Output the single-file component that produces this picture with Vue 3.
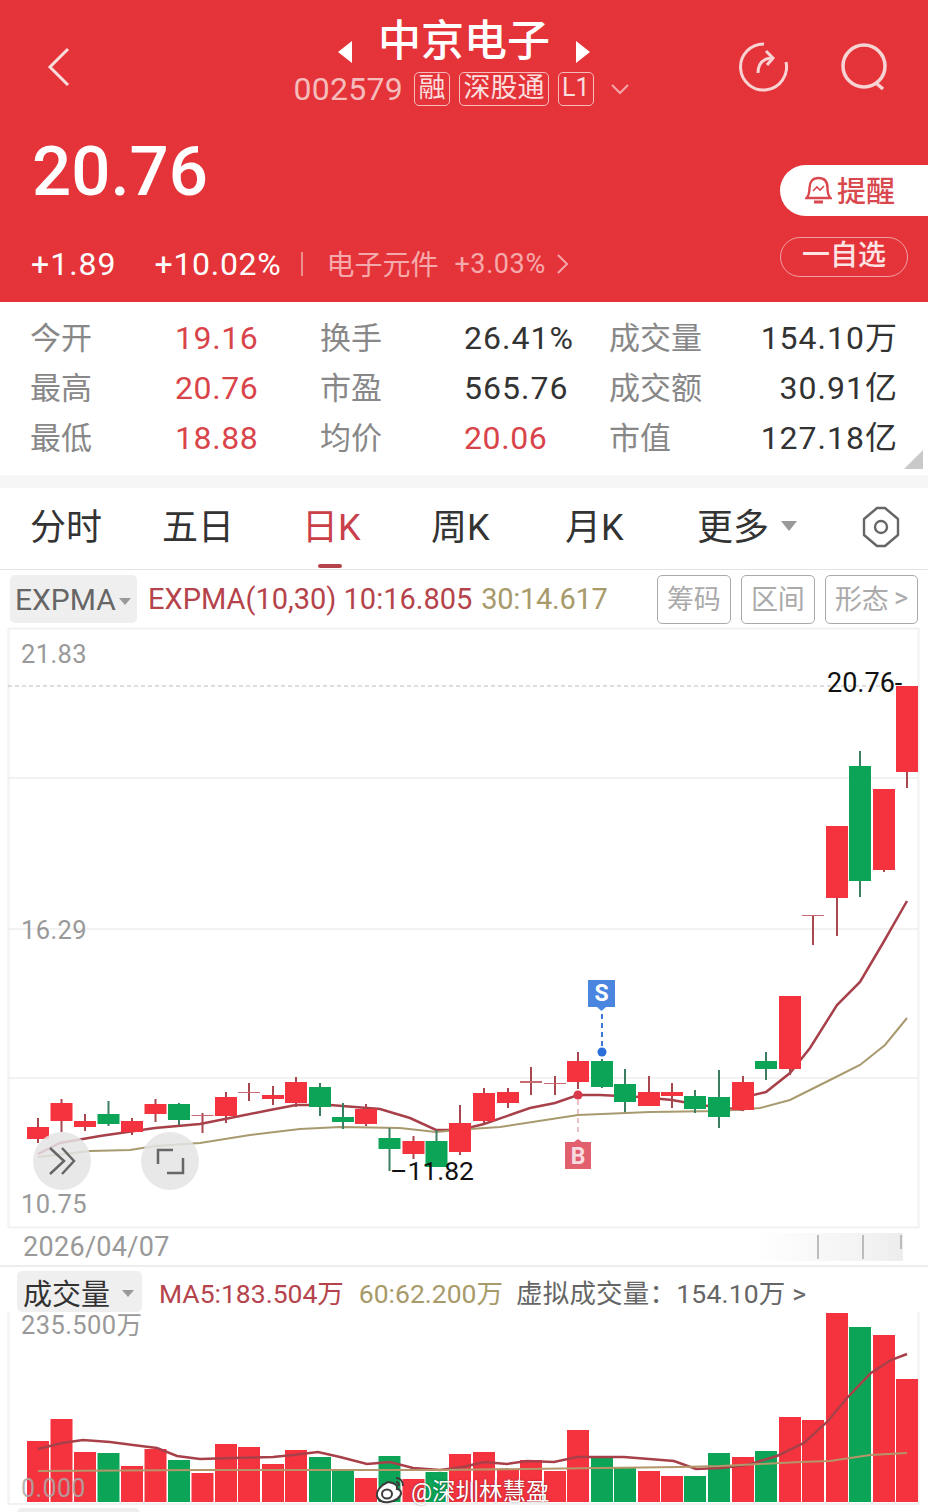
<script setup>
const RED = '#f5333f'
const GREEN = '#0ca558'

// candles: top, bottom, wick top, wick bottom, colour, x
const candles = [
  [1127, 1139, 1118, 1143, 'r', 38], [1103, 1121, 1099, 1132, 'r', 61.5], [1121, 1127, 1114, 1131, 'r', 85],
  [1114, 1124, 1101, 1126, 'g', 108.5], [1121, 1132, 1118, 1135, 'r', 132], [1104, 1114, 1099, 1122, 'r', 155.5],
  [1104, 1120, 1103, 1125, 'g', 179], [1115, 1116, 1113, 1133, 'r', 202.5], [1097, 1116, 1092, 1123, 'r', 226],
  [1092, 1093, 1083, 1101, 'r', 249], [1095, 1099, 1086, 1105, 'r', 273], [1082, 1103, 1077, 1107, 'r', 296],
  [1087, 1107, 1083, 1116, 'g', 320], [1117, 1122, 1103, 1129, 'g', 343], [1109, 1124, 1104, 1126, 'r', 366],
  [1138, 1149, 1128, 1171, 'g', 389.5], [1141, 1154, 1136, 1159, 'r', 413.5], [1141, 1167, 1130, 1167, 'g', 436.5],
  [1123, 1152, 1105, 1155, 'r', 460], [1093, 1121, 1088, 1125, 'r', 484], [1092, 1103, 1088, 1108, 'r', 508],
  [1081, 1083, 1067, 1095, 'r', 531], [1083, 1084, 1076, 1095, 'r', 555], [1061, 1082, 1052, 1089, 'r', 578],
  [1061, 1087, 1059, 1088, 'g', 602], [1084, 1102, 1069, 1112, 'g', 625], [1092, 1106, 1076, 1106, 'r', 649],
  [1092, 1096, 1083, 1108, 'r', 672], [1096, 1109, 1090, 1113, 'g', 695], [1097, 1117, 1070, 1128, 'g', 719],
  [1082, 1110, 1076, 1110, 'r', 743], [1061, 1069, 1052, 1080, 'g', 766], [996, 1069, 996, 1075, 'r', 790],
  [915, 916, 915, 945, 'r', 813], [826, 898, 826, 936, 'r', 837], [766, 881, 751, 897, 'g', 860],
  [789, 870, 789, 872, 'r', 884], [686, 772, 686, 788, 'r', 907]
].map(([top, bottom, wickTop, wickBottom, c, x]) => ({ top, bottom, wickTop, wickBottom, x, fill: c === 'r' ? RED : GREEN, wick: c === 'r' ? '#a8474f' : '#3d7d62' }))

const expma10 = '38,1154 60,1143 100,1136 155,1128 200,1124 230,1118 270,1110 296,1105 330,1105 380,1109 410,1118 436,1130 460,1130 484,1124 530,1108 555,1103 578,1095 600,1095 640,1097 672,1100 700,1105 743,1110 753,1095 766,1092 790,1073 810,1048 837,1005 860,982 883,943 907,901'
const expma30 = '38,1157 90,1151 130,1150 155,1146 200,1143 250,1135 300,1129 340,1127 400,1128 436,1132 470,1129 500,1127 578,1115 650,1112 720,1111 760,1108 790,1100 830,1080 860,1065 885,1045 907,1018'

// volume bars: top y and colour, all sit on the same base line
const volTops = [1441, 1419, 1452, 1453, 1466, 1449, 1460, 1473, 1444, 1447, 1464, 1450, 1457, 1470, 1478, 1456, 1479, 1472, 1454, 1452, 1470, 1460, 1471, 1430, 1456, 1468, 1471, 1476, 1476, 1453, 1457, 1451, 1417, 1420, 1313, 1327, 1335, 1379]
const volGreen = [3, 6, 12, 13, 15, 17, 24, 25, 28, 29, 31, 35]
const volumes = volTops.map((top, i) => ({ top, x: candles[i].x - 11, fill: volGreen.includes(i) ? GREEN : RED }))

const ma5 = '38,1449 62,1443 83,1440 110,1442 133,1445 157,1448 177,1456 200,1459 233,1458 273,1457 293,1455 318,1452 340,1457 367,1464 390,1462 413,1468 440,1470 463,1467 484,1462 507,1464 527,1461 554,1462 577,1457 624,1457 674,1461 696,1469 721,1468 747,1465 777,1456 804,1443 827,1422 847,1398 871,1373 891,1360 907,1354'
const ma60 = '38,1471 200,1470 440,1470 600,1468 680,1467 721,1466 800,1462 830,1461 870,1455 907,1453'

const stats = [
  ['今开', '19.16', 'up', '换手', '26.41%', '', '成交量', '154.10万'],
  ['最高', '20.76', 'up', '市盈', '565.76', '', '成交额', '30.91亿'],
  ['最低', '18.88', 'up', '均价', '20.06', 'up', '市值', '127.18亿']
]
const tabs = ['分时', '五日', '日K', '周K', '月K']
</script>

<template>
  <div class="page">
    <header class="head">
      <div class="nav">
        <svg class="back" width="24" height="40" viewBox="0 0 24 40"><path d="M21 2 3 20l18 18" fill="none" stroke="#f9dcdc" stroke-width="3" /></svg>
        <div class="nav-mid">
          <div class="title-row">
            <span class="tri tri-l"></span>
            <span class="title">中京电子</span>
            <span class="tri tri-r"></span>
          </div>
          <div class="code-row">
            <span class="code">002579</span>
            <span class="tag">融</span>
            <span class="tag">深股通</span>
            <span class="tag tag-l">L1</span>
            <svg class="code-more" width="20" height="12" viewBox="0 0 20 12"><path d="M2 2l8 8 8-8" fill="none" stroke="#f3a5a7" stroke-width="2" /></svg>
          </div>
        </div>
        <div class="nav-icons">
          <svg width="50" height="50" viewBox="0 0 50 50" fill="none" stroke="#f8d3d3" stroke-width="3">
            <path d="M26 2a23 23 0 1 0 22 18" />
            <path d="M20 31c0-8 4-14 13-15" />
            <path d="M28 9l7 7-6 7" />
          </svg>
          <svg width="50" height="50" viewBox="0 0 50 50" fill="none" stroke="#f8d3d3" stroke-width="3.5">
            <circle cx="24" cy="24" r="21" />
            <path d="M36 41l7 6" />
          </svg>
        </div>
      </div>
      <div class="quote">
        <div>
          <div class="price">20.76</div>
          <div class="change">
            <span class="chg">+1.89</span>
            <span class="chg chg-pct">+10.02%</span>
            <span class="sep"></span>
            <span class="sector">电子元件</span>
            <span class="sector-pct">+3.03%</span>
            <svg width="14" height="22" viewBox="0 0 14 22"><path d="M2 2l9 9-9 9" fill="none" stroke="#f3a5a7" stroke-width="2" /></svg>
          </div>
        </div>
        <div class="actions">
          <div class="remind">
            <svg width="27" height="30" viewBox="0 0 27 30" fill="none" stroke="#d8484e" stroke-width="2.4">
              <path d="M13.500 2c-6 0-9 4-9 10 0 5-1 8-3 10h24c-2-2-3-5-3-10 0-6-3-10-9-10z" />
              <path d="M9 26h9" stroke-width="3" />
              <path d="M8 15l4-4 3 3 4-4" stroke-width="1.600" />
            </svg>
            <span class="remind-text">提醒</span>
          </div>
          <div class="watch">一自选</div>
        </div>
      </div>
    </header>

    <section class="stats">
      <template v-for="row in stats" :key="row[0]">
        <span class="lab">{{ row[0] }}</span>
        <span class="val" :class="row[2]">{{ row[1] }}</span>
        <span class="lab">{{ row[3] }}</span>
        <span class="val" :class="row[5]">{{ row[4] }}</span>
        <span class="lab">{{ row[6] }}</span>
        <span class="val last">{{ row[7] }}</span>
      </template>
      <span class="corner"></span>
    </section>

    <nav class="tabs">
      <span v-for="(t, i) in tabs" :key="t" class="tab" :class="{ on: i === 2 }">{{ t }}</span>
      <span class="tab more">更多<i class="caret"></i></span>
      <svg class="gear" width="38" height="42" viewBox="0 0 38 42" fill="none" stroke="#666" stroke-width="2.400" stroke-linejoin="round">
        <path d="M15 2h8l13 11v16L23 40h-8L2 29V13z" />
        <circle cx="19" cy="21" r="6" />
      </svg>
    </nav>

    <div class="toolbar">
      <div class="chip">EXPMA<i class="caret small"></i></div>
      <span class="ind-red">EXPMA(10,30) 10:16.805</span>
      <span class="ind-tan">30:14.617</span>
      <div class="btns">
        <span class="btn">筹码</span>
        <span class="btn">区间</span>
        <span class="btn">形态<b>&gt;</b></span>
      </div>
    </div>

    <svg class="chart" width="928" height="600" viewBox="0 628 928 600">
      <path d="M8.500 628v600M918.500 628v600M8 628.500h911M8 1227.500h911" fill="none" stroke="#f2f2f2" stroke-width="2" />
      <path d="M8 778h910M8 929h910M8 1078h910" stroke="#eeeeee" stroke-width="1.500" />
      <path d="M8 686h890" stroke="#bbb" stroke-dasharray="4 3" />

      <polyline :points="expma10" fill="none" stroke="#a8404a" stroke-width="2.500" />
      <polyline :points="expma30" fill="none" stroke="#a89a6e" stroke-width="2" />

      <g v-for="c in candles" :key="c.x">
        <line :x1="c.x" :x2="c.x" :y1="c.wickTop" :y2="c.wickBottom" :stroke="c.wick" stroke-width="2" />
        <rect :x="c.x - 11" :y="c.top" width="22" :height="c.bottom - c.top" :fill="c.bottom - c.top < 3 ? '#c96a70' : c.fill" />
      </g>

      <text x="21" y="663" class="axis">21.83</text>
      <text x="21" y="939" class="axis">16.29</text>
      <text x="21" y="1213" class="axis">10.75</text>
      <text x="827" y="692" class="mark">20.76-</text>
      <text x="390" y="1180" class="mark low">–11.82</text>

      <path d="M602 1014v36" stroke="#3d78d8" stroke-width="2" stroke-dasharray="5 4" />
      <circle cx="602" cy="1052" r="4.500" fill="#2a6fdb" />
      <path d="M588 980h27v27h-9l-4.500 4-4.500-4h-9z" fill="#4a86e0" />
      <text x="601.500" y="1001" class="flag">S</text>

      <path d="M578 1100v36" stroke="#ecc0c5" stroke-width="2" stroke-dasharray="5 4" />
      <circle cx="578" cy="1095" r="4.500" fill="#d9394a" />
      <path d="M565 1142h9l4-3 4 3h9v27h-26z" fill="#e2606e" />
      <text x="578" y="1164" class="flag pale">B</text>

      <circle cx="62" cy="1161" r="29" fill="#e4e4e4" opacity=".85" />
      <path d="M50 1148l14 13-14 13M62 1148l12 13-12 13" fill="none" stroke="#666" stroke-width="2.500" />
      <circle cx="170" cy="1161" r="29" fill="#e4e4e4" opacity=".85" />
      <path d="M158 1164v-14h15M183 1158v15h-16" fill="none" stroke="#666" stroke-width="2.500" />
    </svg>

    <div class="date-row">
      <span>2026/04/07</span>
      <div class="smudge"><i></i><i></i><i></i></div>
    </div>

    <section class="vol">
      <div class="vol-head">
        <div class="chip vol-chip">成交量<i class="caret small"></i></div>
        <span class="ma5">MA5:183.504万</span>
        <span class="ma60">60:62.200万</span>
        <span class="virt">虚拟成交量：154.10万 &gt;</span>
      </div>
      <svg class="vol-chart" width="928" height="200" viewBox="0 1312 928 200">
        <path d="M8.500 1312v192M918.500 1312v192M8 1504h911" fill="none" stroke="#f2f2f2" stroke-width="2" />
        <rect v-for="b in volumes" :key="b.x" :x="b.x" :y="b.top" width="22" :height="1502 - b.top" :fill="b.fill" />
        <polyline :points="ma5" fill="none" stroke="#a8404a" stroke-width="2.500" />
        <polyline :points="ma60" fill="none" stroke="#b5966a" stroke-width="2" />
        <text x="21" y="1334" class="axis">235.500万</text>
        <text x="21" y="1497" class="axis zero">0.000</text>
        <rect x="17" y="1508" width="123" height="10" rx="5" fill="#eee" />
      </svg>
      <div class="wm">
        <svg width="32" height="30" viewBox="0 0 32 30" fill="#fff" stroke="#3b3b3b" stroke-width="2">
          <path d="M13 7C6 10 1 16 2 21c1 5 7 7 12 6 7-1 12-5 12-9 0-3-3-4-4-4 1-4-2-6-9-7z" />
          <ellipse cx="12" cy="19" rx="5" ry="4.500" />
          <path d="M21 3c4 0 7 3 7 8M21 7c2 0 3 2 3 4" fill="none" />
        </svg>
        <span>@深圳林慧盈</span>
      </div>
    </section>
  </div>
</template>

<style scoped>
.page {
  position: relative;
  width: 928px;
  height: 1512px;
  overflow: hidden;
  background: #fff;
  font-family: Roboto, "Noto Sans CJK SC", sans-serif;
}
.head {
  height: 302px;
  background: #e4343a;
  color: #fff;
}
.nav {
  height: 122px;
  display: grid;
  grid-template-columns: 1fr auto 1fr;
}
.back {
  margin: 47px 0 0 47px;
}
.nav-mid {
  display: flex;
  flex-direction: column;
  align-items: center;
  padding-top: 10px;
}
.title-row {
  display: flex;
  align-items: center;
  height: 53px;
}
.title {
  margin: 0 26px;
  font-size: 43px;
  font-weight: 500;
}
.tri {
  width: 0;
  height: 0;
  margin-top: 31px;
  border-top: 11px solid transparent;
  border-bottom: 11px solid transparent;
}
.tri-l {
  border-right: 14px solid #fff;
}
.tri-r {
  border-left: 14px solid #fff;
}
.code-row {
  display: flex;
  align-items: center;
  gap: 9px;
  height: 36px;
  margin: 8px 5px 0 0;
}
.code {
  margin-right: 2px;
  font-size: 32px;
  letter-spacing: 0.300px;
  color: #f6bcbc;
}
.tag {
  height: 34px;
  padding: 0 3.500px;
  box-sizing: border-box;
  border: 1.500px solid #f6bcbc;
  border-radius: 5px;
  font-size: 27px;
  line-height: 30px;
  color: #fbdede;
}
.tag-l {
  padding: 0 3px;
  font-size: 25px;
}
.code-more {
  margin-left: 7px;
}
.nav-icons {
  display: flex;
  justify-content: flex-end;
  gap: 52px;
  padding: 42px 38px 0 0;
}
.quote {
  display: flex;
  justify-content: space-between;
}
.price {
  height: 100px;
  padding-left: 32px;
  font-size: 69px;
  font-weight: 500;
  line-height: 100px;
}
.change {
  display: flex;
  align-items: center;
  height: 84px;
  padding: 0 0 0 31px;
}
.chg {
  font-size: 32px;
  letter-spacing: 1px;
  color: #fff;
}
.chg-pct {
  margin-left: 38px;
  letter-spacing: 0.700px;
}
.sep {
  width: 2px;
  height: 24px;
  margin: 0 23px 0 20px;
  background: #ef8e90;
}
.sector {
  margin-bottom: 3px;
  font-size: 28px;
  color: #f6a9ab;
}
.sector-pct {
  margin: 0 10px 0 16px;
  font-size: 27px;
  letter-spacing: 0.600px;
  color: #f6a9ab;
}
.actions {
  display: flex;
  flex-direction: column;
  align-items: flex-end;
  padding-top: 43px;
}
.remind {
  display: flex;
  align-items: center;
  gap: 5px;
  width: 148px;
  height: 51px;
  padding-left: 25px;
  box-sizing: border-box;
  background: #fff;
  border-radius: 26px 0 0 26px;
  font-size: 29px;
  font-weight: 500;
  color: #d8484e;
}
.remind-text {
  margin-bottom: 4px;
}
.watch {
  width: 128px;
  height: 40px;
  margin: 21px 20px 0 0;
  box-sizing: border-box;
  border: 1.500px solid #f0a0a2;
  border-radius: 20px;
  font-size: 28px;
  font-weight: 500;
  line-height: 36px;
  text-align: center;
  color: #fde4e4;
}
.stats {
  position: relative;
  display: grid;
  grid-template-columns: 145px 145px 144px 145px 100px 1fr;
  grid-auto-rows: 50px;
  align-items: center;
  height: 186px;
  box-sizing: border-box;
  padding: 11px 30px 0 30px;
  border-bottom: 13px solid #f6f6f6;
}
.lab {
  margin-bottom: 5px;
  font-size: 31px;
  color: #888;
}
.val {
  font-size: 32px;
  letter-spacing: 1px;
  color: #333;
}
.val.up {
  letter-spacing: 0.600px;
  color: #d9444a;
}
.val.last {
  margin-bottom: 7px;
  text-align: right;
}
.corner {
  position: absolute;
  right: 5px;
  bottom: 6px;
  width: 0;
  height: 0;
  border-left: 19px solid transparent;
  border-bottom: 19px solid #c9c9c9;
}
.tabs {
  display: grid;
  grid-template-columns: 132px 140px 129px 134px 132px 165px 1fr;
  align-items: center;
  height: 82px;
  box-sizing: border-box;
  padding: 0 28px 9px 30px;
  border-bottom: 1px solid #e4e4e4;
}
.tab {
  position: relative;
  font-size: 36px;
  color: #333;
}
.tab.on {
  color: #c9404a;
}
.tab.on::after {
  content: "";
  position: absolute;
  left: 16px;
  bottom: -18px;
  width: 24px;
  height: 4px;
  background: #b5434b;
  border-radius: 2px;
}
.more {
  display: flex;
  align-items: center;
  gap: 12px;
}
.caret {
  width: 0;
  height: 0;
  margin-top: 4px;
  border-left: 8px solid transparent;
  border-right: 8px solid transparent;
  border-top: 10px solid #999;
}
.caret.small {
  border-left-width: 6px;
  border-right-width: 6px;
  border-top-width: 7px;
}
.gear {
  justify-self: end;
  margin-top: 6px;
}
.toolbar {
  display: flex;
  align-items: center;
  height: 58px;
  padding: 0 10px;
  font-size: 29px;
}
.chip {
  display: flex;
  align-items: center;
  gap: 3px;
  width: 127px;
  height: 48px;
  padding-left: 5px;
  box-sizing: border-box;
  background: #efefef;
  border-radius: 5px;
  font-size: 30px;
  color: #666;
}
.ind-red {
  margin-left: 11px;
  color: #b5434b;
}
.ind-tan {
  margin-left: 9px;
  letter-spacing: -0.300px;
  color: #a89a6a;
}
.btns {
  display: flex;
  gap: 10px;
  margin-left: auto;
}
.btn {
  display: flex;
  align-items: center;
  justify-content: center;
  height: 49px;
  padding: 0 9px 3px;
  box-sizing: border-box;
  border: 1px solid #aaa;
  border-radius: 5px;
  font-size: 27px;
  color: #aaa;
}
.btn b {
  margin-left: 5px;
  font-weight: 400;
}
.chart,
.vol-chart {
  display: block;
  overflow: visible;
}
.axis {
  font-size: 25.500px;
  letter-spacing: 0.400px;
  fill: #999;
}
.zero {
  font-size: 25px;
  fill: #aaa;
  opacity: 0.85;
}
.mark {
  font-size: 27px;
  fill: #111;
}
.mark.low {
  font-size: 26.500px;
}
.flag {
  font-size: 23px;
  font-weight: 700;
  text-anchor: middle;
  fill: #fff;
}
.flag.pale {
  fill: #f8dce0;
}
.date-row {
  position: relative;
  display: flex;
  align-items: center;
  height: 39px;
  padding-left: 23px;
  box-sizing: border-box;
  border-bottom: 2px solid #eee;
  font-size: 27px;
  letter-spacing: 0.300px;
  color: #999;
}
.smudge {
  position: absolute;
  left: 755px;
  top: 5px;
  width: 148px;
  height: 28px;
  background: linear-gradient(90deg, #fff, #f5f5f5 60%, #ececec);
  opacity: 0.9;
}
.smudge i {
  position: absolute;
  top: 2px;
  width: 2px;
  height: 24px;
  background: #b5b5b5;
}
.smudge i:nth-child(1) {
  left: 62px;
}
.smudge i:nth-child(2) {
  left: 107px;
}
.smudge i:nth-child(3) {
  left: 145px;
  height: 14px;
}
.vol {
  position: relative;
}
.vol-head {
  display: flex;
  align-items: center;
  height: 45px;
  padding: 4px 0 0 17px;
  box-sizing: border-box;
  font-size: 26.500px;
}
.vol-chip {
  flex: none;
  width: 125px;
  height: 41px;
  padding-left: 6px;
  gap: 12px;
  color: #333;
  font-size: 29px;
}
.ma5 {
  margin-left: 17px;
  color: #b5434b;
}
.ma60 {
  margin-left: 15px;
  color: #a89a6a;
}
.virt {
  margin-left: 13px;
  letter-spacing: 0.200px;
  color: #666;
}
.wm {
  position: absolute;
  left: 375px;
  top: 206px;
  display: flex;
  align-items: center;
  gap: 4px;
  font-size: 23.500px;
  color: #fff;
  text-shadow: 0 0 2px rgba(0, 0, 0, 0.5);
}
</style>

<style>
html,
body {
  margin: 0;
  background: #fff;
}
</style>
